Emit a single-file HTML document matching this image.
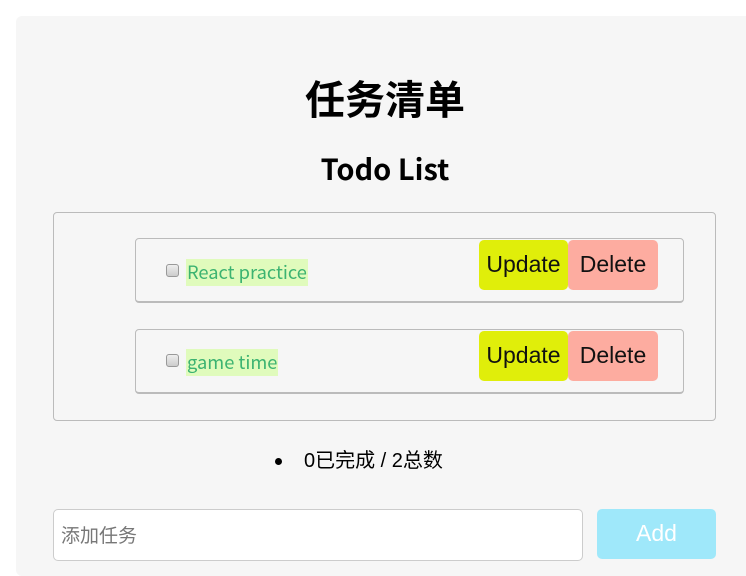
<!DOCTYPE html>
<html><head><meta charset="utf-8"><style>
*{margin:0;padding:0;box-sizing:border-box}
body{width:746px;height:566px;background:#fff;position:relative;overflow:hidden;font-family:"Liberation Sans","Noto Sans CJK SC",sans-serif}
.panel{position:absolute;left:16px;top:16px;width:740px;height:560px;background:#f6f6f6;border-radius:6px}
.a{position:absolute}
h1{position:absolute;left:0;width:770px;text-align:center;top:73px;font-size:40px;font-weight:bold;font-family:"Noto Sans CJK SC",sans-serif;line-height:48px}
h2{position:absolute;left:0;width:770px;text-align:center;top:150px;font-size:29px;font-weight:bold;font-family:"Noto Sans CJK SC",sans-serif;line-height:36px}
.box{left:53px;top:212px;width:663px;height:209px;border:1px solid #bbb;border-radius:4px}
.item{left:135px;width:549px;height:65px;border:1px solid #bbb;border-bottom:2px solid #bbb;border-radius:4px}
.cb{width:13px;height:13px;border:1px solid #999;border-radius:3px;background:linear-gradient(#eee,#ccc);left:30px}
.txt{left:50px;height:27px;background:#e0fbbc;color:#3cb371;font-size:18.3px;line-height:27px;font-family:"Noto Sans CJK SC","Liberation Sans",sans-serif;padding:0 1px}
.btn{top:1px;height:50px;border-radius:5px;font-size:23px;line-height:48px;text-align:center;color:#111}
.up{left:343px;width:89px;background:#e0ee0a}
.de{left:432px;width:90px;background:#fdaca0}
</style></head><body>
<div class="panel"></div>
<h1>任务清单</h1>
<h2>Todo List</h2>
<div class="a box"></div>
<div class="a item" style="top:238px">
 <div class="a cb" style="top:25px"></div>
 <div class="a txt" style="top:20px">React practice</div>
 <div class="a btn up">Update</div><div class="a btn de">Delete</div>
</div>
<div class="a item" style="top:329px">
 <div class="a cb" style="top:24px"></div>
 <div class="a txt" style="top:19px">game time</div>
 <div class="a btn up">Update</div><div class="a btn de">Delete</div>
</div>
<div class="a" style="left:275px;top:458px;width:7px;height:7px;border-radius:50%;background:#000"></div>
<div class="a" style="left:304px;top:448px;font-size:20px;line-height:26px;font-family:'Liberation Sans','Noto Sans CJK SC',sans-serif">0已完成 / 2总数</div>
<div class="a" style="left:53px;top:509px;width:530px;height:52px;background:#fff;border:1px solid #ccc;border-radius:5px;padding-left:7px;font-size:19px;line-height:50px;color:#777;font-family:'Noto Sans CJK SC',sans-serif">添加任务</div>
<div class="a" style="left:597px;top:509px;width:119px;height:50px;background:#9fe8fa;border-radius:5px;color:#fff;font-size:23px;line-height:48px;text-align:center">Add</div>
</body></html>
